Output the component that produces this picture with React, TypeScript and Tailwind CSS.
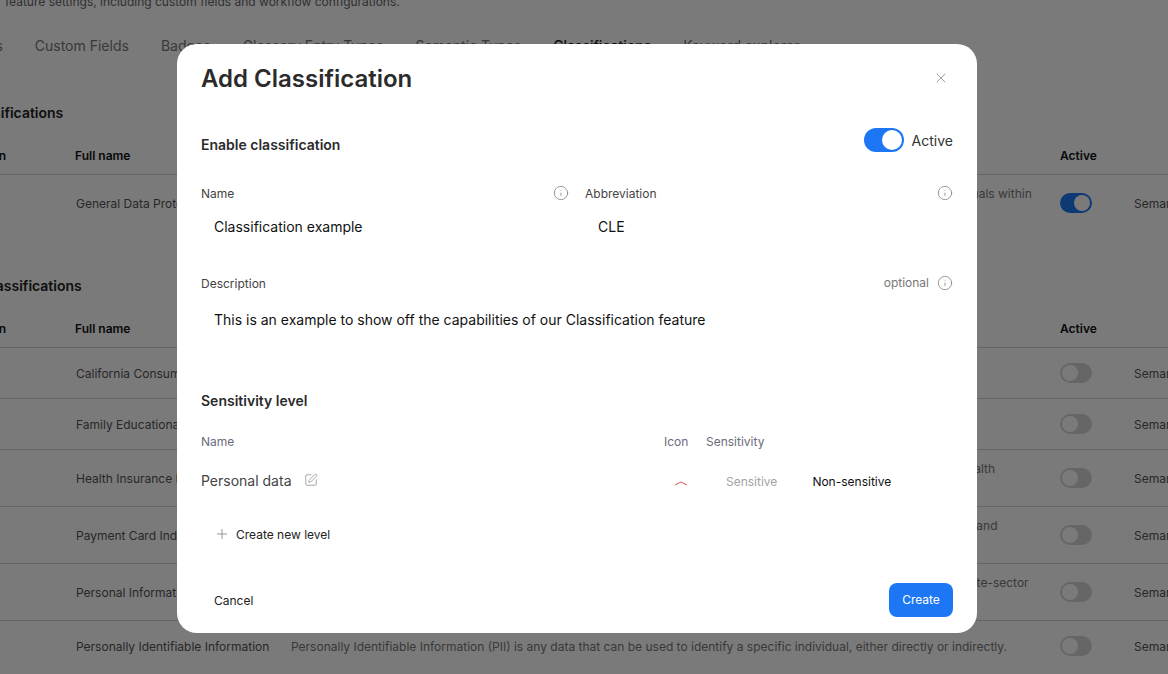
import { Info, Plus, SquarePen, X } from 'lucide-react';

const tabs = ['Glossary Settings', 'Custom Fields', 'Badges', 'Glossary Entry Types', 'Semantic Types', 'Classifications', 'Keyword explorer'];

const activeRows = [
    {
        abbr: 'GDPR',
        name: 'General Data Protection Regulation',
        desc: 'The General Data Protection Regulation (GDPR) is an EU law that regulates the processing of personal data for all individuals within the EU and EEA.',
        on: true,
    },
];

const availableRows = [
    {
        abbr: 'CCPA',
        name: 'California Consumer Privacy Act',
        desc: 'The California Consumer Privacy Act (CCPA) offers California residents rights over personal data that businesses collect.',
    },
    {
        abbr: 'FERPA',
        name: 'Family Educational Rights and Privacy Act',
        desc: 'The Family Educational Rights and Privacy Act (FERPA) protects the privacy of student education records.',
    },
    {
        abbr: 'HIPAA',
        name: 'Health Insurance Portability and Accountability Act',
        desc: 'The Health Insurance Portability and Accountability Act (HIPAA) sets national standards for the protection of sensitive health information.',
    },
    {
        abbr: 'PCI DSS',
        name: 'Payment Card Industry Data Security Standard',
        desc: 'The Payment Card Industry Data Security Standard (PCI DSS) is a set of security standards for those who store, process and transmit cardholder data.',
    },
    {
        abbr: 'PIPEDA',
        name: 'Personal Information Protection and Electronic Documents Act',
        desc: 'The Personal Information Protection and Electronic Documents Act (PIPEDA) is the Canadian federal privacy law for private-sector organizations.',
    },
    {
        abbr: 'PII',
        name: 'Personally Identifiable Information',
        desc: 'Personally Identifiable Information (PII) is any data that can be used to identify a specific individual, either directly or indirectly.',
    },
];

function Toggle({ on }: { on: boolean }) {
    return (
        <div className={`flex h-5 w-8 shrink-0 items-center rounded-full p-0.5 ${on ? 'justify-end bg-[#1d77f5]' : 'justify-start bg-[#d6d6d6]'}`}>
            <div className="h-4 w-4 rounded-full bg-white" />
        </div>
    );
}

function ClassificationTable({ title, rows }: { title: string; rows: { abbr: string; name: string; desc: string; on?: boolean }[] }) {
    return (
        <section>
            <h2 className="-ml-[13px] text-sm leading-5 font-semibold text-[#222]">{title}</h2>
            <div className="mt-3.5 flex h-[38px] items-center border-b border-[#d6d6d6] text-xs font-semibold text-[#111]">
                <div className="w-[143px] shrink-0">Abbreviation</div>
                <div className="w-[216px] shrink-0">Full name</div>
                <div className="w-[769px] shrink-0">Description</div>
                <div className="w-[74px] shrink-0">Active</div>
            </div>
            {rows.map((row) => (
                <div key={row.abbr} className="flex min-h-[51px] items-center border-b border-[#d6d6d6] py-2 text-xs leading-5 text-[#555] last:min-h-[49px] last:border-b-0">
                    <div className="w-[144px] shrink-0">{row.abbr}</div>
                    <div className="w-[215px] shrink-0 translate-y-px truncate pr-4">{row.name}</div>
                    <div className="w-[769px] shrink-0 translate-y-px pr-5 text-[#777]">{row.desc}</div>
                    <div className="w-[74px] shrink-0">
                        <Toggle on={!!row.on} />
                    </div>
                    <div className="translate-y-px whitespace-nowrap">Semantic Types</div>
                </div>
            ))}
        </section>
    );
}

function InfoIcon() {
    return <Info className="h-4 w-4 text-[#777]" strokeWidth={1.1} />;
}

export default function App() {
    return (
        <div className="relative h-[674px] w-[1168px] overflow-hidden bg-white font-['Inter',sans-serif]">
            {/* Settings page behind the dialog */}
            <div className="ml-[-68px] mt-[-8px] w-[1320px]">
                <p className="whitespace-nowrap pl-[73px] text-xs leading-5 text-[#666]">
                    feature settings, including custom fields and workflow configurations.
                </p>
                <div className="ml-[-45px] mt-6 flex gap-8 whitespace-nowrap text-sm leading-5 text-[#777]">
                    {tabs.map((tab) => (
                        <span key={tab} className={tab === 'Classifications' ? 'font-medium text-[#222]' : ''}>
                            {tab}
                        </span>
                    ))}
                </div>
                <div className="mt-[47px] flex flex-col gap-[45px]">
                    <ClassificationTable title="Active classifications" rows={activeRows} />
                    <ClassificationTable title="Available classifications" rows={availableRows} />
                </div>
            </div>

            {/* Overlay */}
            <div className="absolute inset-0 bg-black/52" />

            {/* Dialog */}
            <div className="absolute left-[177px] top-[44px] flex h-[589px] w-[800px] flex-col rounded-[20px] bg-white px-6 pt-[19px]">
                <div className="flex items-center justify-between">
                    <h1 className="text-2xl font-semibold leading-8 text-[#2b2b2b]">Add Classification</h1>
                    <button className="mb-0.5 mr-1 text-[#7a7a7a]">
                        <X className="h-4 w-4" strokeWidth={1.1} />
                    </button>
                </div>

                <div className="mt-[33px] flex items-start justify-between">
                    <h2 className="pt-[7px] text-sm font-semibold leading-5 text-[#2b2b2b]">Enable classification</h2>
                    <div className="flex items-center gap-2">
                        <div className="flex h-6 w-10 items-center justify-end rounded-full bg-[#1d77f5] p-0.5">
                            <div className="h-5 w-5 rounded-full bg-white" />
                        </div>
                        <span className="pt-px text-sm text-[#333]">Active</span>
                    </div>
                </div>

                <div className="mt-[28px] grid grid-cols-2 gap-4">
                    <div>
                        <div className="flex h-5 items-center justify-between text-xs text-[#444]">
                            <span className="pt-0.5">Name</span>
                            <InfoIcon />
                        </div>
                        <input
                            readOnly
                            value="Classification example"
                            className="mt-[3px] h-10 w-full px-[13px] text-sm text-[#111] outline-none"
                        />
                    </div>
                    <div>
                        <div className="flex h-5 items-center justify-between text-xs text-[#444]">
                            <span className="pt-0.5">Abbreviation</span>
                            <InfoIcon />
                        </div>
                        <input
                            readOnly
                            value="CLE"
                            className="mt-[3px] h-10 w-full px-[13px] text-sm text-[#111] outline-none"
                        />
                    </div>
                </div>

                <div className="mt-[27px] flex h-5 items-center justify-between text-xs text-[#444]">
                    <span className="pt-0.5">Description</span>
                    <span className="flex items-center gap-2 text-[#777]">
                        optional
                        <InfoIcon />
                    </span>
                </div>
                <textarea
                    readOnly
                    value="This is an example to show off the capabilities of our Classification feature"
                    className="mt-[7px] h-[81px] w-full resize-none px-[13px] py-[10px] text-sm leading-5 text-[#111] outline-none"
                />

                <h2 className="mt-[10px] text-sm font-semibold leading-5 text-[#2b2b2b]">Sensitivity level</h2>

                <div className="mt-[21px] flex h-5 items-center text-xs text-[#6b6b7b]">
                    <span className="w-[463px]">Name</span>
                    <span className="w-[42px]">Icon</span>
                    <span>Sensitivity</span>
                </div>

                <div className="mt-[9px] flex h-[40px] items-center">
                    <div className="flex w-[473px] items-center gap-3">
                        <span className="text-sm text-[#444]">Personal data</span>
                        <SquarePen className="mb-0.5 h-3.5 w-3.5 text-[#888]" strokeWidth={1.25} />
                    </div>
                    <svg className="mt-1 h-2 w-3.5" viewBox="0 0 14 8" fill="none" stroke="#e05252" strokeWidth="1">
                        <path d="M1 6 L7 3 L13 6" />
                    </svg>
                    <div className="ml-[38px] flex items-center gap-[35px] pt-0.5 text-xs">
                        <span className="text-[#a3a3a3]">Sensitive</span>
                        <span className="text-[#111]">Non-sensitive</span>
                    </div>
                </div>

                <div className="ml-[13px] mt-[24px] flex h-5 items-center gap-1.5 text-xs text-[#222]">
                    <Plus className="mb-0.5 h-4 w-4 text-[#666]" strokeWidth={1} />
                    <span>Create new level</span>
                </div>

                <div className="mt-[38px] flex items-center justify-between">
                    <button className="ml-[13px] pt-0.5 text-xs text-[#222]">Cancel</button>
                    <button className="h-[34px] w-16 rounded-lg bg-[#1d77f5] text-xs text-white">Create</button>
                </div>
            </div>
        </div>
    );
}
